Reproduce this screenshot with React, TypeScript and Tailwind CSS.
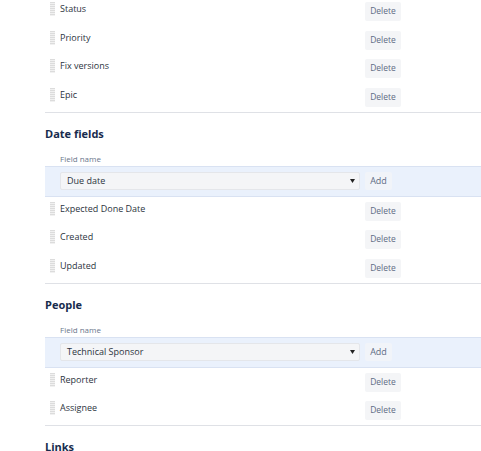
import React from 'react';

const Handle = () => (
    <div className="w-[5px] h-[14px] shrink-0 bg-[repeating-linear-gradient(to_bottom,#dcdcdc_0px,#dcdcdc_1px,#f1f1f1_1px,#f1f1f1_2px)]" />
);

const FieldRow = ({ name }: { name: string }) => (
    <div className="flex h-[28.67px] pt-[5px]">
        <div className="w-[320px] flex items-start gap-[5px] pl-[5px]">
            <Handle />
            <span className="text-[9px] leading-[13px] text-[#2c3440]">{name}</span>
        </div>
        <button className="h-[19px] w-[36px] rounded-[2px] bg-[#f4f5f7] text-[8.5px] text-[#5e6c84]">
            Delete
        </button>
    </div>
);

const AddRow = ({ value }: { value: string }) => (
    <div className="flex border-y border-[#d9e2f2] bg-[#eaf1fc] pt-[5px] pb-[6px]">
        <div className="w-[320px] pl-[15px]">
            <div className="w-[300px] h-[18px] flex items-center justify-between rounded-[2px] border border-[#e4e6ea] bg-[#f4f5f7] pl-[6px] pr-[4px]">
                <span className="text-[9px] text-[#2c3440]">{value}</span>
                <svg width="5" height="4" viewBox="0 0 5 4">
                    <path d="M0 0H5L2.5 4Z" fill="#222" />
                </svg>
            </div>
        </div>
        <button className="h-[18px] w-[27px] rounded-[2px] bg-[#f1f4f9] text-[9px] leading-[18px] text-[#5e6c84]">
            Add
        </button>
    </div>
);

const Section = ({ title, value, fields }: { title: string; value: string; fields: string[] }) => (
    <div>
        <h3 className="mt-[14px] text-[11px] leading-[14px] font-bold text-[#172b4d]">{title}</h3>
        <div className="mt-[13px] mb-[2px] pl-[15px] text-[8px] leading-[10px] text-[#6b778c]">Field name</div>
        <AddRow value={value} />
        {fields.map((f) => (
            <FieldRow key={f} name={f} />
        ))}
        <div className="h-px bg-[#dfe1e6]" />
    </div>
);

export default function App() {
    return (
        <div className="w-[481px] h-[451px] overflow-hidden bg-white pl-[45px] font-['Open_Sans',sans-serif]">
            <div className="-mt-[3px]">
                {['Status', 'Priority', 'Fix versions', 'Epic'].map((f) => (
                    <FieldRow key={f} name={f} />
                ))}
                <div className="h-px bg-[#dfe1e6]" />
            </div>
            <Section title="Date fields" value="Due date" fields={['Expected Done Date', 'Created', 'Updated']} />
            <Section title="People" value="Technical Sponsor" fields={['Reporter', 'Assignee']} />
            <h3 className="mt-[14px] text-[11px] leading-[14px] font-bold text-[#172b4d]">Links</h3>
        </div>
    );
}
